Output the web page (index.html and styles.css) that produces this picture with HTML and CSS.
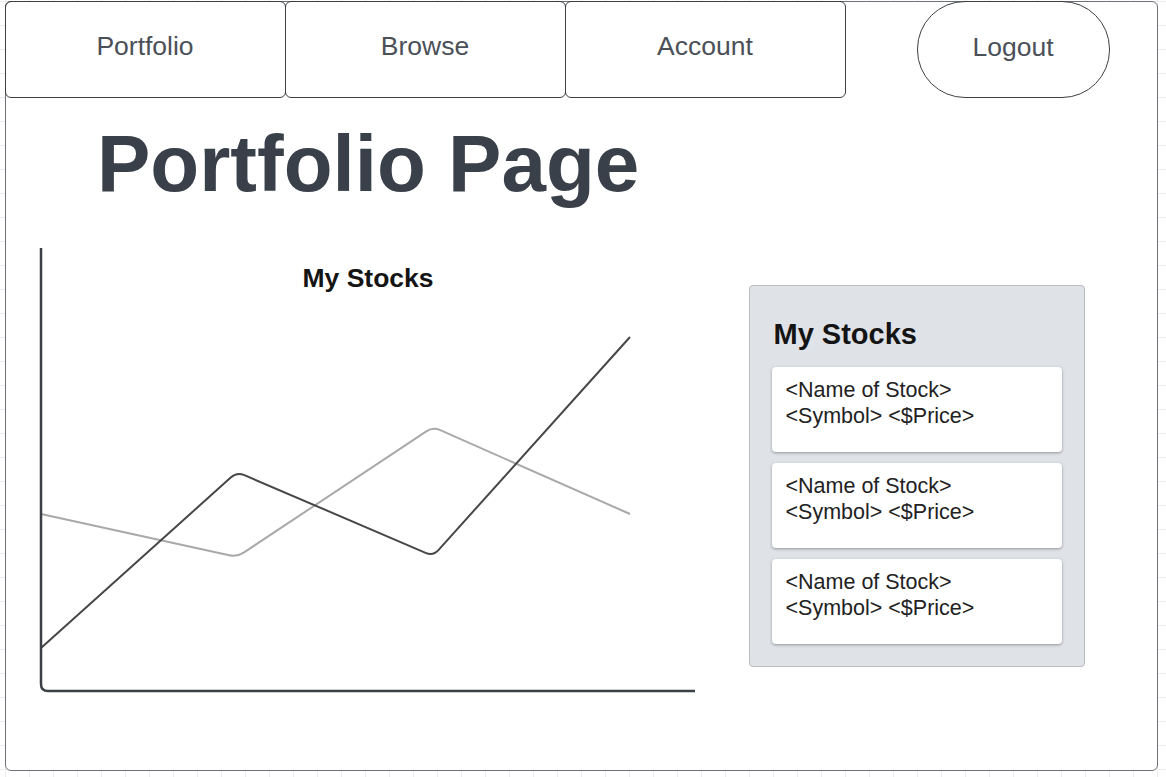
FILE: index.html
```html
<!DOCTYPE html>
<html lang="en">
<head>
<meta charset="utf-8">
<title>Portfolio Page</title>
<link rel="stylesheet" href="styles.css">
</head>
<body>
<div class="frame">
  <nav class="nav">
    <a class="tab">Portfolio</a>
    <a class="tab">Browse</a>
    <a class="tab">Account</a>
    <a class="logout">Logout</a>
  </nav>
  <h1 class="title">Portfolio Page</h1>
  <div class="content">
    <svg class="chart" width="660" height="446" viewBox="0 0 660 446">
      <text class="chart-title" x="329" y="40" text-anchor="middle">My Stocks</text>
      <path d="M2 267 L190.2 308.3 Q198 310 204.7 305.6 L387.3 184.4 Q394 180 401.3 183.2 L591 267" fill="none" stroke="#a9a9a9" stroke-width="2" stroke-linejoin="round"/>
      <path d="M2 401 L192 230.3 Q198 225 205.4 228.2 L386.6 305.8 Q394 309 399.4 303.1 L591 90" fill="none" stroke="#474747" stroke-width="2" stroke-linejoin="round"/>
      <path d="M2 1 L2 437 Q2 444 9 444 L656 444" fill="none" stroke="#3b3f46" stroke-width="2.5"/>
    </svg>
    <aside class="panel">
      <h2 class="panel-title">My Stocks</h2>
      <div class="card">&lt;Name of Stock&gt;<br>&lt;Symbol&gt; &lt;$Price&gt;</div>
      <div class="card">&lt;Name of Stock&gt;<br>&lt;Symbol&gt; &lt;$Price&gt;</div>
      <div class="card">&lt;Name of Stock&gt;<br>&lt;Symbol&gt; &lt;$Price&gt;</div>
    </aside>
  </div>
</div>
</body>
</html>
```
FILE: styles.css
```css
html, body {
  margin: 0;
  padding: 0;
}
body {
  width: 1166px;
  height: 777px;
  overflow: hidden;
  font-family: "Liberation Sans", Arial, sans-serif;
  background-color: #ffffff;
  background-image:
    linear-gradient(#ececec 1px, transparent 1px),
    linear-gradient(90deg, #ececec 1px, transparent 1px);
  background-size: 24px 24px;
  background-position: 5px 1px;
}
.frame {
  box-sizing: border-box;
  margin: 1px 0 0 5px;
  width: 1153px;
  height: 770px;
  border: 1.5px solid #6d7178;
  border-radius: 6px;
  background: #ffffff;
}
.nav {
  display: flex;
  margin: -1.5px 0 0 -1.5px;
}
.tab {
  box-sizing: border-box;
  width: 281px;
  height: 97px;
  border: 1px solid #3c4043;
  border-radius: 6px;
  margin-right: -1px;
  display: flex;
  align-items: center;
  justify-content: center;
  padding-bottom: 6px;
  font-size: 26.5px;
  color: #4b5058;
}
.logout {
  box-sizing: border-box;
  width: 193px;
  height: 97px;
  margin-left: 72px;
  border: 1px solid #3c4043;
  border-radius: 48px;
  display: flex;
  align-items: center;
  justify-content: center;
  padding-bottom: 4px;
  font-size: 26.5px;
  color: #4b5058;
}
.title {
  margin: 20px 0 0 91px;
  font-size: 80px;
  line-height: 92px;
  font-weight: 700;
  color: #3a4049;
}
.content {
  display: flex;
  align-items: flex-start;
  margin: 37px 0 0 32.5px;
}
.chart {
  display: block;
  flex: none;
}
.chart-title {
  font-family: "Liberation Sans", Arial, sans-serif;
  font-size: 26.5px;
  font-weight: 700;
  fill: #141414;
}
.panel {
  box-sizing: border-box;
  width: 336px;
  height: 382px;
  margin: 38px 0 0 50px;
  padding: 32px 22px 0 22px;
  background: #dfe2e7;
  border: 1px solid #b8bcc3;
  border-radius: 4px;
}
.panel-title {
  margin: 0 0 17px 2px;
  font-size: 29px;
  line-height: 32px;
  font-weight: 700;
  color: #141414;
}
.card {
  box-sizing: border-box;
  height: 85px;
  margin-bottom: 11px;
  padding: 10px 14px 0;
  background: #ffffff;
  border-radius: 4px;
  box-shadow: 0 1px 3px rgba(0, 0, 0, 0.35);
  font-size: 21.5px;
  line-height: 26px;
  color: #222222;
}
```
